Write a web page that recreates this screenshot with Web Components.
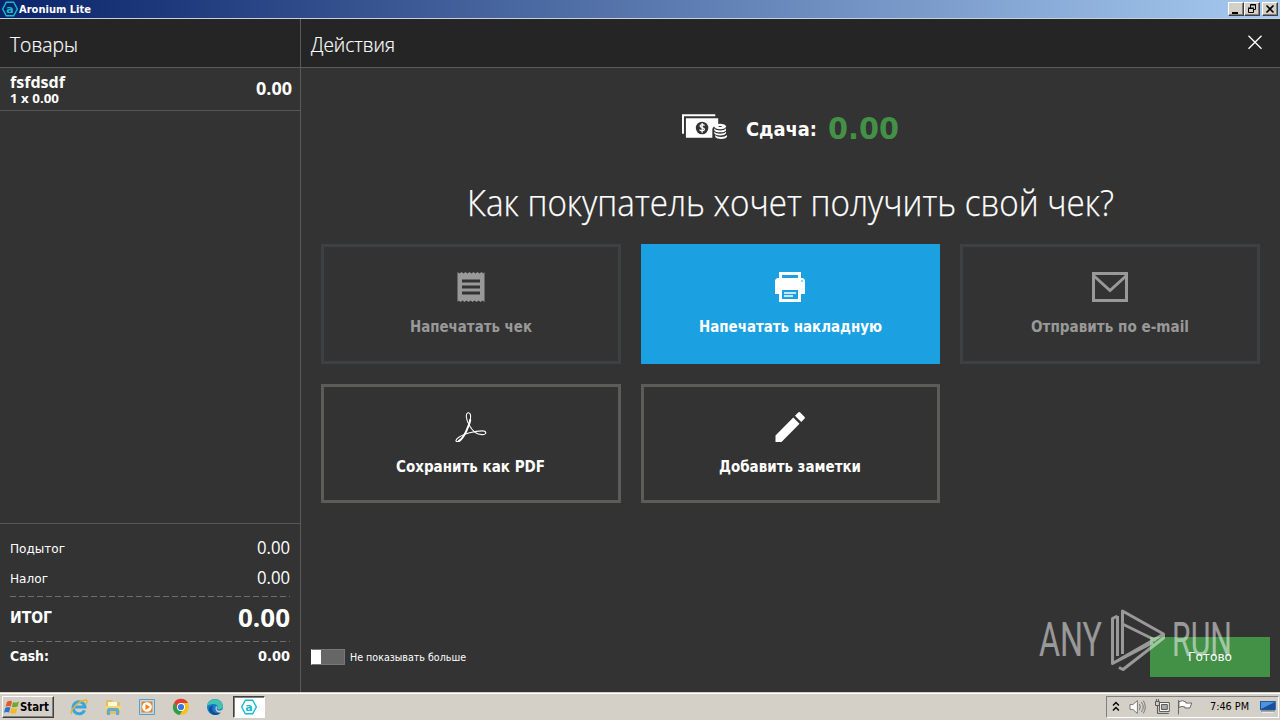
<!DOCTYPE html>
<html lang="ru">
<head>
<meta charset="utf-8">
<title>Aronium Lite</title>
<style>
html,body{margin:0;width:1280px;height:720px;overflow:hidden;background:#333}
body{font-family:"DejaVu Sans Condensed","DejaVu Sans",sans-serif;color:#fff}
</style>
</head>
<body>
<pos-app></pos-app>
<script>
const define=(name,html)=>customElements.define(name,class extends HTMLElement{
  constructor(){super();this.attachShadow({mode:'open'}).innerHTML=html;}
});

/* One line of text, condensed or widened to the width in "w". */
customElements.define('fit-text',class extends HTMLElement{
  constructor(){
    super();
    this.attachShadow({mode:'open'}).innerHTML=`<style>
      :host{display:block;white-space:nowrap;flex:none}
      span{display:inline-block;transform-origin:0 50%}
    </style><span><slot></slot></span>`;
  }
  connectedCallback(){
    const w=+this.getAttribute('w');
    requestAnimationFrame(()=>this.fit(w));
    this.fit(w);
  }
  fit(w){
    const s=this.shadowRoot.querySelector('span');
    this.style.width=w+'px';
    if(s.offsetWidth){
      s.style.transform='none';
      s.style.transform=`scaleX(${w/s.getBoundingClientRect().width})`;
    }
  }
});

define('aronium-mark',`<style>:host{display:block;width:16px;height:16px}svg{display:block;width:100%;height:100%}text{font:bold 11px "DejaVu Sans",sans-serif}</style>
<svg viewBox="0 0 16 16"><path d="M4.3 1.2h7.4L15.3 8l-3.6 6.800H4.300L.7 8z" fill="none" stroke="#19b9cf" stroke-width="1.400"/><text x="8" y="11.700" text-anchor="middle" fill="#19b9cf">a</text></svg>`);

define('caption-button',`<style>
:host{display:block;box-sizing:border-box;width:16px;height:14px;background:#d4d0c8;border:1px solid;border-color:#fff #404040 #404040 #fff;box-shadow:inset -1px -1px #808080}
::slotted(svg){display:block}</style><slot></slot>`);

define('title-bar',`<style>
:host{display:flex;box-sizing:border-box;height:19px;align-items:center;padding:0 2px;background:linear-gradient(90deg,#0a246a,#a6caf0);border-bottom:1px solid #c9d2dc}
fit-text{font:bold 11px/18px "DejaVu Sans Condensed","DejaVu Sans",sans-serif;margin-left:1px;padding-top:1px}
.btns{display:flex;margin-left:auto}.close{margin-left:2px}
</style>
<aronium-mark></aronium-mark><fit-text w="72">Aronium Lite</fit-text>
<div class="btns">
<caption-button><svg width="14" height="12"><path d="M3 9h6v2H3z"/></svg></caption-button>
<caption-button><svg width="14" height="12"><path d="M5.500 5V1.500h5v5H9M5 2h6M3.500 5.500h5v4h-5zM3 5h6" fill="none" stroke="#000"/></svg></caption-button>
<caption-button class="close"><svg width="14" height="12"><path d="M3.500 2.500l7 7m0-7l-7 7" stroke="#000" stroke-width="1.600"/></svg></caption-button>
</div>`);

define('panel-header',`<style>
:host{display:flex;box-sizing:border-box;height:49px;padding:0 17px 0 10px;background:#252525;border-bottom:1px solid #5a5a5a;justify-content:space-between;align-items:center;font:300 20px/44px "Open Sans",sans-serif;-webkit-text-stroke:.2px #fff}
::slotted(fit-text){padding-top:3px}
</style><slot></slot>`);

define('order-line',`<style>
:host{display:flex;box-sizing:border-box;height:43px;padding:0 8px 0 10px;border-bottom:1px solid #565656;justify-content:space-between;font-family:"Open Sans",sans-serif;font-weight:700}
.n{font-size:16px;line-height:18px;margin-top:5px}.q{font-size:12px;line-height:14px;margin-top:1px}.p{font-size:17px;line-height:42px}
</style>
<div><fit-text class="n" w="55">fsfdsdf</fit-text><fit-text class="q" w="49">1 x 0.00</fit-text></div><fit-text class="p" w="36">0.00</fit-text>`);

define('total-row',`<style>
:host{display:flex;justify-content:space-between;align-items:center;height:30px}
</style><slot name="label"></slot><slot name="value"></slot>`);

define('order-totals',`<style>
:host{display:block;box-sizing:border-box;height:169px;padding:9px 10px 0;border-top:1px solid #565656}
.l{font-size:13px;line-height:28px;padding-top:2px}.v{font:400 18px/28px "Open Sans",sans-serif;padding-bottom:2px}
.rule{height:1px;margin-top:3px;background:repeating-linear-gradient(90deg,#6e6e6e 0 6px,transparent 6px 9px)}
.t{height:44px}.t .l{font-weight:700;font-size:15px;padding:0 0 2px}.t .v{font:700 25px/38px "Open Sans",sans-serif;padding-bottom:5px}
.r2{margin-top:0}.c{height:29px}.c .l,.c .v{font:bold 14px/26px "DejaVu Sans Condensed","DejaVu Sans",sans-serif;padding:0 0 2px}
</style>
<total-row><fit-text class="l" slot="label" w="55">Подытог</fit-text><fit-text class="v" slot="value" w="33">0.00</fit-text></total-row>
<total-row><fit-text class="l" slot="label" w="38">Налог</fit-text><fit-text class="v" slot="value" w="33">0.00</fit-text></total-row>
<div class="rule"></div>
<total-row class="t"><fit-text class="l" slot="label" w="42">ИТОГ</fit-text><fit-text class="v" slot="value" w="52">0.00</fit-text></total-row>
<div class="rule r2"></div>
<total-row class="c"><fit-text class="l" slot="label" w="39">Cash:</fit-text><fit-text class="v" slot="value" w="32">0.00</fit-text></total-row>`);

define('order-panel',`<style>
:host{display:flex;flex-direction:column;width:300px;border-right:1px solid #5a5a5a}.fill{flex:1}
</style>
<panel-header><fit-text w="68">Товары</fit-text></panel-header><order-line></order-line><div class="fill"></div><order-totals></order-totals>`);

define('action-tile',`<style>
:host{display:flex;flex-direction:column;align-items:center;box-sizing:border-box;border:3px solid #5c5c58;padding-top:25px;color:#fff;font:bold 15px/20px "DejaVu Sans Condensed","DejaVu Sans",sans-serif}
:host([disabled]){border-color:#3e4043;color:#999}
:host([primary]){background:#1ba1e2;border-color:#1ba1e2}
.i{height:30px;margin-bottom:15px}
::slotted(svg){display:block}
</style><div class="i"><slot name="icon"></slot></div><slot></slot>`);

define('change-due',`<style>
:host{display:flex;align-items:center;justify-content:center;height:40px}
svg{display:block;margin:-2px 19px 0 0}
.l{font:bold 19px/40px "DejaVu Sans Condensed","DejaVu Sans",sans-serif;margin-right:11px;padding-top:1px}
.v{font:bold 30px/40px "DejaVu Sans",sans-serif;color:#439047;padding-top:2px}
</style>
<svg width="45" height="28" viewBox="0 0 46 28"><path d="M1 21V2h33" fill="none" stroke="#fff" stroke-width="2"/><path d="M4 5h33v7.500c-4 .2-6 1.700-6 4V25H4z" fill="#fff"/><circle cx="20.500" cy="15" r="6.400" fill="#333"/><path d="M23 12.500c-1-1.400-4.500-1.200-4.500.6 0 2 4.400 1.200 4.400 3.300 0 1.900-3.800 2-5 .4M20.600 10v10" fill="none" stroke="#fff" stroke-width="1.300"/><g fill="#fff"><ellipse cx="39" cy="13.500" rx="6" ry="2.800"/><path d="M33 15.300c1.500 3 10.500 3 12 0v1.900c-1.500 3-10.500 3-12 0zM33 18.600c1.500 3 10.500 3 12 0v1.900c-1.500 3-10.500 3-12 0zM34 22.200c1.500 2.700 10 2.700 12 0v1.800c-1.500 3-10.500 3-12 0z"/></g><path d="M37.500 13.500h3" stroke="#333"/></svg>
<fit-text class="l" w="71">Сдача:</fit-text><fit-text class="v" w="71">0.00</fit-text>`);

define('toggle-switch',`<style>
:host{display:flex;align-items:center;height:16px}
.s{box-sizing:border-box;width:34px;height:16px;background:linear-gradient(90deg,#fff 0 9px,#666 9px);border:1px solid #777;border-left-color:#fff;margin-right:5px}
fit-text{font-size:11px;line-height:16px;padding-top:1px}
</style><div class="s"></div><fit-text w="116">Не показывать больше</fit-text>`);

define('anyrun-mark',`<style>
:host{display:flex;align-items:center;opacity:.5;color:#fff;font:400 49px/62px Roboto,sans-serif}
svg{display:block;margin:0 7px 0 9px}
fit-text{padding-top:0}
</style>
<fit-text w="63">ANY</fit-text>
<svg width="54" height="62" viewBox="0 0 54 62" fill="none" stroke="#fff" stroke-width="3" stroke-linejoin="round"><path d="M6.500 7L1.500 9.500V54.500L42 33.500M6.500 7V47M11.500 45V2L52.500 25V29L12 60.500L8 58.500M11.500 15L45 31.500M1.500 54.500L51 26"/></svg>
<fit-text w="60">RUN</fit-text>`);

define('actions-panel',`<style>
:host{display:flex;flex-direction:column;flex:1;min-width:0;position:relative}
change-due{margin-top:40px}
h1{margin:30px 0 0;font:300 36px/50px "Open Sans",sans-serif;display:flex;justify-content:center;height:50px;-webkit-text-stroke:.25px #fff}
.grid{display:grid;grid-template-columns:repeat(3,1fr);grid-template-rows:120px 119px;gap:20px;padding:0 20px;margin-top:16px}
.foot{display:flex;margin-top:auto;height:56px;padding:0 10px;justify-content:space-between}
toggle-switch{margin-top:13px}
.done{display:flex;box-sizing:border-box;width:120px;height:40px;margin-top:1px;align-items:center;justify-content:center;background:#439047;font-size:13px;line-height:40px}
anyrun-mark{position:absolute;left:738px;top:590px}
</style>
<panel-header><fit-text w="84">Действия</fit-text><svg width="16" height="16"><path d="M1.500 .8l13 13m0-13l-13 13" stroke="#fff" stroke-width="1.300"/></svg></panel-header>
<change-due></change-due>
<h1><fit-text w="647">Как покупатель хочет получить свой чек?</fit-text></h1>
<div class="grid">
<action-tile disabled><svg slot="icon" width="28" height="30" viewBox="0 0 28 30"><path d="M.5 0L2.500 1.500 4.500 0 6.500 1.500 8.500 0l2 1.500 2-1.500 2 1.500 2-1.500 2 1.500 2-1.500 2 1.500 2-1.500 2 1.500L27.500 0v30l-2-1.500-2 1.500-2-1.500-2 1.500-2-1.500-2 1.500-2-1.500-2 1.500-2-1.500-2 1.500-2-1.500-2 1.500-2-1.500L.5 30z" fill="#999"/><path d="M5 9h18M5 15h18M5 21h18" stroke="#333" stroke-width="2.800"/></svg><fit-text w="122">Напечатать чек</fit-text></action-tile>
<action-tile primary><svg slot="icon" width="30" height="30" viewBox="0 0 30 30"><path d="M4 0h22v6h2l2 2v14h-4v8H4v-8H0V8l2-2h2z" fill="#fff"/><path d="M7 3h16v3H7zM7 18h16v9H7z" fill="#1ba1e2"/><path d="M9 21h12M9 24h9" stroke="#fff" stroke-width="1.300"/><circle cx="27" cy="9" r=".8" fill="#1ba1e2"/></svg><fit-text w="183">Напечатать накладную</fit-text></action-tile>
<action-tile disabled><svg slot="icon" width="36" height="30" viewBox="0 0 36 30" fill="none" stroke="#999" stroke-width="3"><path d="M1.500 1.500h33v27h-33zM2 4l16 14.500L34 4"/></svg><fit-text w="158">Отправить по e-mail</fit-text></action-tile>
<action-tile><svg slot="icon" width="32" height="30" viewBox="0 0 32 30" fill="none" stroke="#fff" stroke-linecap="round"><path d="M13 .8c-3 .8-1.600 7 1 12 3.500 6.700 8.500 10.200 14 9.800 4-.3 3.700-3.800-1-3.700C20 19 9 21.500 3.500 25.500-.5 28.500.5 30.600 4 29c5-2.800 10.500-15 11.500-23 .4-3.300-.5-5.600-2.500-5.200z" stroke-width="1.100"/><path d="M13.800 13C10.800 21 7 27.500 4 29M15.200 8c-.4 2-.8 3.500-1.400 5" stroke-width="2"/></svg><fit-text w="149">Сохранить как PDF</fit-text></action-tile>
<action-tile><svg slot="icon" width="30" height="30" viewBox="0 0 30 30" fill="#fff"><path d="M.5 23.500L18.300 5.500l6.200 6.200L6.500 30h-6zM20 3.800L23.200.6q1-1 2 0l4.200 4.200q1 1 0 2L26.200 10z"/></svg><fit-text w="142">Добавить заметки</fit-text></action-tile>
</div>
<div class="foot"><toggle-switch></toggle-switch><div class="done"><fit-text w="44">Готово</fit-text></div></div>
<anyrun-mark></anyrun-mark>`);

define('task-bar',`<style>
:host{display:flex;box-sizing:border-box;height:28px;padding:3px 1px 2px 2px;background:#d4d0c8;border-top:1px solid #d4d0c8;box-shadow:inset 0 1px #fff;color:#000;align-items:center}
.start{display:flex;box-sizing:border-box;width:52px;height:22px;border:1px solid;border-color:#fff #404040 #404040 #fff;box-shadow:inset -1px -1px #808080;align-items:center;padding-left:1px;font:bold 12px/20px "DejaVu Sans Condensed","DejaVu Sans",sans-serif}
.start svg{flex:none}
.q{display:flex;gap:16px;margin-left:16px}svg{display:block}
.app{display:flex;box-sizing:border-box;width:32px;height:22px;margin-left:9px;background:#fff;border:1px solid;border-color:#404040 #fff #fff #404040;box-shadow:inset 1px 1px #808080;align-items:center;justify-content:center}
.tray{display:flex;box-sizing:border-box;width:173px;height:22px;margin-left:auto;border:1px solid;border-color:#808080 #fff #fff #808080;align-items:center;padding:0 2px 0 5px}
.time{font-size:11px;line-height:20px;margin:0 11px 0 16px}
</style>
<div class="start"><svg width="16" height="16" viewBox="0 0 16 16"><path d="M3 3q3-2 5-.5L6.800 7.500q-3-1.200-5.300.3z" fill="#e8562a"/><path d="M9 3q3 1.300 6-.5L13.700 7.500q-3 1.500-6 .2z" fill="#72a82e"/><path d="M1.200 9q3-1.600 5.200-.3L5 13.500q-2.500-1.300-5 .2z" fill="#2f72c6"/><path d="M7.500 9q3 1.500 6 0L12 14q-3 1.500-6-.2z" fill="#f4b820"/></svg><fit-text w="29">Start</fit-text></div>
<div class="q">
<svg width="18" height="18" viewBox="0 0 18 18" fill="none"><path d="M14.500 12.300A6 6 0 1 1 15 9H5" stroke="#39a5de" stroke-width="3"/><path d="M2 16C-2 14 9 2 16 2c2 0 1 3-.5 4.500" stroke="#e4b630" stroke-width="1.400"/></svg>
<svg width="18" height="18" viewBox="0 0 18 18"><path d="M2 2h6l1 2h7v12H2z" fill="#e0c060"/><path d="M4 4h9v5H4z" fill="#fff8d3"/><path d="M1 8h16v4H1z" fill="#f0d67c"/><path d="M3 17v-5q0-2 2-2h8q2 0 2 2v5h-3v-4H6v4z" fill="#62a9d5"/></svg>
<svg width="18" height="18" viewBox="0 0 18 18"><path d="M1.500 1.500h15v15h-15z" fill="#b9dcf3" stroke="#5d9bc9"/><path d="M3.500 3.500h11v11h-11z" fill="#f47e16"/><circle cx="9" cy="9" r="4.800" fill="#fff"/><path d="M7.500 6l4.500 3-4.500 3z" fill="#f47e16"/></svg>
<svg width="18" height="18" viewBox="0 0 18 18"><circle cx="9" cy="9" r="8" fill="#f3c21c"/><path d="M2 5a8 8 0 0 1 14 0H9L5.500 11z" fill="#df4032"/><path d="M2 5l4 6 4 2-2.500 4A8 8 0 0 1 2 5z" fill="#2e9d4e"/><circle cx="9" cy="9" r="4" fill="#fff"/><circle cx="9" cy="9" r="3.100" fill="#3979df"/></svg>
<svg width="18" height="18" viewBox="0 0 18 18"><circle cx="9" cy="9" r="8" fill="#1778c8"/><path d="M1 8C2-1 16-1 17 8c0 3-3 4-6 3 2-4-2-7-10-3z" fill="#42c2b0"/><path d="M7 8c-3 5 3 9 8 6-2 3-5 3-7 3-6-2-7-9-1-9z" fill="#125092"/><path d="M10 8c2 1 0 3 1 4 2 1 4 1 6-1v3c-5 2-9-1-7-6z" fill="#d4d0c8"/></svg>
</div>
<div class="app"><aronium-mark></aronium-mark></div>
<div class="tray">
<svg width="8" height="12" viewBox="0 0 8 12" fill="none" stroke="#000" stroke-width="1.400"><path d="M1 4.500l3-3 3 3M1 9.500l3-3 3 3"/></svg>
<svg style="margin-left:9px" width="17" height="16" viewBox="0 0 17 16" fill="none" stroke="#777"><path d="M1 5.500h3L8.500 1.500v13L4 10.500H1z" fill="#fff"/><path d="M10.500 5q2 3 0 6M12.500 3q4 5 0 10M14.500 1.500q4 6.500 0 13"/></svg>
<svg style="margin-left:8px" width="17" height="16" viewBox="0 0 17 16" fill="none" stroke="#555"><path d="M5.500 3.500h10v9h-10z" fill="#fff"/><path d="M7.500 5.500h6v5h-6z" fill="#aaa"/><path d="M7 14.500h8M1.500 2.500h4v4h-4zM3.500 7v7.500H7M2.500 0v2M4.500 0v2"/></svg>
<svg style="margin-left:7px" width="17" height="16" viewBox="0 0 17 16" stroke="#666" fill="#fff"><path d="M1.500 1v14.500M2 2.500q4-2 7 .5v1h6l-2 5H8V8Q5 6.500 2 8.500z"/></svg>
<fit-text class="time" w="39">7:46 PM</fit-text>
<svg width="16" height="14" viewBox="0 0 16 14"><path d="M0 1h16v9H0z" fill="#184e9c"/><path d="M1 2h14L1 9z" fill="#4e94dc"/><path d="M2 12h12" stroke="#eee" stroke-width="2"/><path d="M1 11h14" stroke="#456"/></svg>
</div>`);

define('pos-app',`<style>
:host{display:flex;flex-direction:column;width:1280px;height:720px;background:#333}
main{display:flex;flex:1;min-height:0}
</style><title-bar></title-bar><main><order-panel></order-panel><actions-panel></actions-panel></main><task-bar></task-bar>`);
</script>
</body>
</html>
